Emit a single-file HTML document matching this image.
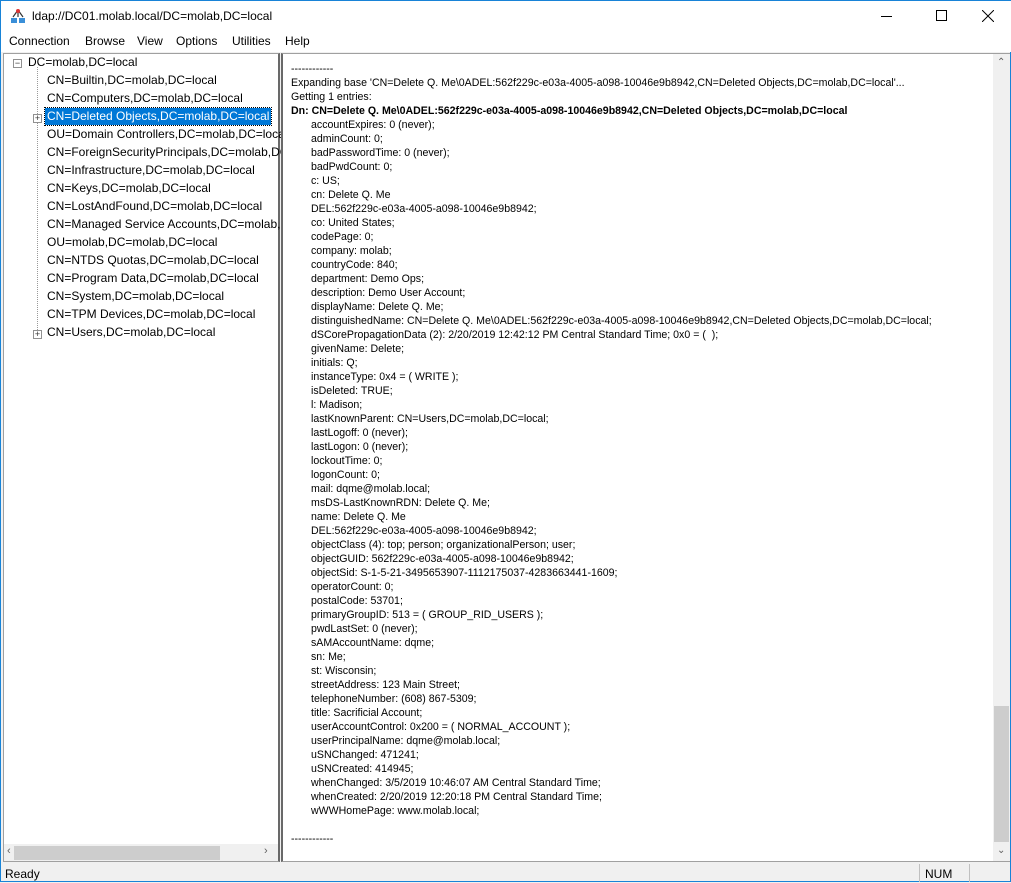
<!DOCTYPE html>
<html><head><style>
*{margin:0;padding:0;box-sizing:border-box}
body{width:1011px;height:882px;background:#f0f0f0;font-family:"Liberation Sans",sans-serif;position:relative;overflow:hidden;border:1px solid #1883d7}
.title{position:absolute;left:0;top:0;width:1011px;height:31px;background:#fff;font-size:12px}
.menu{position:absolute;left:0;top:31px;width:1011px;height:20px;background:#fff;font-size:12px}
.menu span{position:absolute;top:2px}
.tree{position:absolute;left:2px;top:52px;width:277px;height:809px;background:#fff;border:1px solid #a0a0a0;border-right:2px solid #696969;font-size:12px}
.tree .it{position:absolute;height:17px;line-height:17px;white-space:nowrap}
.right{position:absolute;left:280px;top:52px;width:729px;height:809px;background:#fff;border:1px solid #a0a0a0;border-left:2px solid #696969}
.txt{position:absolute;left:8px;top:8px;font-size:10.6px;line-height:14px;white-space:pre;color:#000}
.txt div.i{padding-left:20px}
.status{position:absolute;left:0;top:862px;width:1011px;height:20px;font-size:12px}
.pm{position:absolute;width:9px;height:9px;border:1px solid #919191;background:#fff;font-size:9px;line-height:7px;text-align:center;color:#333}
</style></head><body>
<div class="title">
<svg style="position:absolute;left:9px;top:7px" width="16" height="16" viewBox="0 0 16 16"><rect x="1" y="10" width="6" height="5" fill="#3a8fd8"/><rect x="9" y="10" width="6" height="5" fill="#3a8fd8"/><path d="M8 2 L3 9 M8 2 L13 9 M8 2 V9" stroke="#333" stroke-width="1.2" fill="none"/><circle cx="8" cy="3" r="2" fill="#d33"/></svg>
<span style="position:absolute;left:31px;top:8px">ldap://DC01.molab.local/DC=molab,DC=local</span>
<div style="position:absolute;left:880px;top:15px;width:11px;height:1px;background:#000"></div>
<div style="position:absolute;left:935px;top:9px;width:11px;height:11px;border:1px solid #000"></div>
<svg style="position:absolute;left:981px;top:9px" width="12" height="12"><path d="M0 0L12 12M12 0L0 12" stroke="#000"/></svg>
</div>
<div class="menu"><span style="left:8px">Connection</span><span style="left:84px">Browse</span><span style="left:136px">View</span><span style="left:175px">Options</span><span style="left:231px">Utilities</span><span style="left:284px">Help</span></div>
<div class="tree">
<div style="position:absolute;left:33px;top:13px;width:0;height:267px;border-left:1px dotted #999"></div>
<div class="pm" style="left:9px;top:5px">−</div>
<div class="it" style="left:24px;top:0px">DC=molab,DC=local</div>
<div class="it" style="left:43px;top:18px">CN=Builtin,DC=molab,DC=local</div>
<div class="it" style="left:43px;top:36px">CN=Computers,DC=molab,DC=local</div>
<div class="pm" style="left:29px;top:60px">+</div>
<div class="it" style="left:41px;top:54px;background:#0078d7;color:#fff;padding:0 2px;outline:1px dotted #000">CN=Deleted Objects,DC=molab,DC=local</div>
<div class="it" style="left:43px;top:72px">OU=Domain Controllers,DC=molab,DC=local</div>
<div class="it" style="left:43px;top:90px">CN=ForeignSecurityPrincipals,DC=molab,DC=local</div>
<div class="it" style="left:43px;top:108px">CN=Infrastructure,DC=molab,DC=local</div>
<div class="it" style="left:43px;top:126px">CN=Keys,DC=molab,DC=local</div>
<div class="it" style="left:43px;top:144px">CN=LostAndFound,DC=molab,DC=local</div>
<div class="it" style="left:43px;top:162px">CN=Managed Service Accounts,DC=molab,DC=local</div>
<div class="it" style="left:43px;top:180px">OU=molab,DC=molab,DC=local</div>
<div class="it" style="left:43px;top:198px">CN=NTDS Quotas,DC=molab,DC=local</div>
<div class="it" style="left:43px;top:216px">CN=Program Data,DC=molab,DC=local</div>
<div class="it" style="left:43px;top:234px">CN=System,DC=molab,DC=local</div>
<div class="it" style="left:43px;top:252px">CN=TPM Devices,DC=molab,DC=local</div>
<div class="pm" style="left:29px;top:276px">+</div>
<div class="it" style="left:43px;top:270px">CN=Users,DC=molab,DC=local</div>
<div style="position:absolute;left:0;top:790px;width:274px;height:17px;background:#f0f0f0"></div>
<div style="position:absolute;left:10px;top:792px;width:206px;height:14px;background:#cdcdcd"></div>
<div style="position:absolute;left:3px;top:791px;font-size:11px;color:#606060">‹</div>
<div style="position:absolute;left:260px;top:791px;font-size:11px;color:#606060">›</div>
</div>
<div class="right">
<div class="txt"><div>------------</div><div>Expanding base 'CN=Delete Q. Me\0ADEL:562f229c-e03a-4005-a098-10046e9b8942,CN=Deleted Objects,DC=molab,DC=local'...</div><div>Getting 1 entries:</div><div style="font-weight:bold">Dn: CN=Delete Q. Me\0ADEL:562f229c-e03a-4005-a098-10046e9b8942,CN=Deleted Objects,DC=molab,DC=local</div><div class="i">accountExpires: 0 (never);
adminCount: 0;
badPasswordTime: 0 (never);
badPwdCount: 0;
c: US;
cn: Delete Q. Me
DEL:562f229c-e03a-4005-a098-10046e9b8942;
co: United States;
codePage: 0;
company: molab;
countryCode: 840;
department: Demo Ops;
description: Demo User Account;
displayName: Delete Q. Me;
distinguishedName: CN=Delete Q. Me\0ADEL:562f229c-e03a-4005-a098-10046e9b8942,CN=Deleted Objects,DC=molab,DC=local;
dSCorePropagationData (2): 2/20/2019 12:42:12 PM Central Standard Time; 0x0 = (  );
givenName: Delete;
initials: Q;
instanceType: 0x4 = ( WRITE );
isDeleted: TRUE;
l: Madison;
lastKnownParent: CN=Users,DC=molab,DC=local;
lastLogoff: 0 (never);
lastLogon: 0 (never);
lockoutTime: 0;
logonCount: 0;
mail: dqme@molab.local;
msDS-LastKnownRDN: Delete Q. Me;
name: Delete Q. Me
DEL:562f229c-e03a-4005-a098-10046e9b8942;
objectClass (4): top; person; organizationalPerson; user;
objectGUID: 562f229c-e03a-4005-a098-10046e9b8942;
objectSid: S-1-5-21-3495653907-1112175037-4283663441-1609;
operatorCount: 0;
postalCode: 53701;
primaryGroupID: 513 = ( GROUP_RID_USERS );
pwdLastSet: 0 (never);
sAMAccountName: dqme;
sn: Me;
st: Wisconsin;
streetAddress: 123 Main Street;
telephoneNumber: (608) 867-5309;
title: Sacrificial Account;
userAccountControl: 0x200 = ( NORMAL_ACCOUNT );
userPrincipalName: dqme@molab.local;
uSNChanged: 471241;
uSNCreated: 414945;
whenChanged: 3/5/2019 10:46:07 AM Central Standard Time;
whenCreated: 2/20/2019 12:20:18 PM Central Standard Time;
wWWHomePage: www.molab.local;</div><div> </div><div>------------</div></div>
<div style="position:absolute;left:710px;top:0;width:17px;height:807px;background:#f0f0f0"></div>
<div style="position:absolute;left:711px;top:652px;width:15px;height:136px;background:#cdcdcd"></div>
<div style="position:absolute;left:714px;top:3px;font-size:10px;color:#606060">⌃</div>
<div style="position:absolute;left:714px;top:791px;font-size:10px;color:#606060">⌄</div>
</div>
<div class="status"><span style="position:absolute;left:4px;top:4px">Ready</span>
<div style="position:absolute;left:918px;top:1px;width:1px;height:18px;background:#c0c0c0"></div>
<span style="position:absolute;left:924px;top:4px">NUM</span>
<div style="position:absolute;left:968px;top:1px;width:1px;height:18px;background:#c0c0c0"></div>
</div>
</body></html>
